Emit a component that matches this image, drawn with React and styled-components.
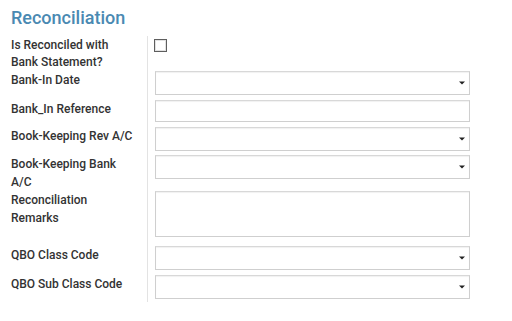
import React from "react";
import styled, { createGlobalStyle } from "styled-components";

const Global = createGlobalStyle`
  html, body { margin: 0; padding: 0; background: #fff; }
  body { font-family: Roboto, "Liberation Sans", sans-serif; }
  * { box-sizing: border-box; }
`;

const Page = styled.div`
  padding: 7px 0 0 0;
`;

const Title = styled.h2`
  margin: 0 0 7.5px 11px;
  font-family: Roboto, "Liberation Sans", sans-serif;
  font-size: 18px;
  font-weight: 500;
  line-height: 21px;
  color: #4a89b2;
`;

const Form = styled.div`
  display: flex;
  flex-direction: column;
`;

const Row = styled.div`
  display: grid;
  grid-template-columns: 136px 1fr;
  align-items: stretch;
`;

const Label = styled.div`
  padding: 1px 0 0 11px;
  font-size: 12px;
  line-height: 17.4px;
  font-weight: 500;
  color: #333;
`;

const Field = styled.div`
  border-left: 1px solid #e3e3e3;
  margin-left: 11px;
  padding: 0 0 ${(p) => (p.$last ? 3 : 4.7)}px 7px;
`;

const Check = styled.input.attrs({ type: "checkbox" })`
  appearance: none;
  display: block;
  width: 13px;
  height: 13px;
  margin: 3px 0 0 -1px;
  border: 1px solid #5e5e5e;
  box-shadow: inset 0 0 0 1px #e2e2e2;
  background: #fff;
  border-radius: 0;
`;

const controlBase = `
  display: block;
  width: 315px;
  border: 1px solid #cfcfcf;
  border-top-color: #d8d8d8;
  box-shadow: inset 0 1px 1px rgba(0,0,0,0.06);
  background: #fff;
  border-radius: 0;
  font-family: Roboto, "Liberation Sans", sans-serif;
  font-size: 11px;
  color: #333;
  padding: 0 6px;
  outline: none;
  margin: 0;
`;

const TextBox = styled.input.attrs({ type: "text" })`
  ${controlBase}
  height: 22px;
`;

const SelectWrap = styled.div`
  position: relative;
  width: 315px;
`;

const SelectBox = styled.select`
  ${controlBase}
  appearance: none;
  height: 24px;
`;

const Caret = styled.svg`
  position: absolute;
  right: 5px;
  top: 10px;
  width: 6px;
  height: 4px;
  pointer-events: none;
`;

const Area = styled.textarea`
  ${controlBase}
  height: 46px;
  resize: none;
  margin-bottom: 4px;
  padding: 4px 6px;
`;

function Select() {
  return (
    <SelectWrap>
      <SelectBox defaultValue="">
        <option value=""></option>
      </SelectBox>
      <Caret viewBox="0 0 6 4">
        <path d="M0 0.5 H6 L3 3.5 Z" fill="#222" />
      </Caret>
    </SelectWrap>
  );
}

export default function App() {
  return (
    <>
      <Global />
      <Page>
        <Title>Reconciliation</Title>
        <Form>
          <Row>
            <Label>Is Reconciled with Bank Statement?</Label>
            <Field>
              <Check />
            </Field>
          </Row>
          <Row>
            <Label>Bank-In Date</Label>
            <Field>
              <Select />
            </Field>
          </Row>
          <Row>
            <Label>Bank_In Reference</Label>
            <Field>
              <TextBox />
            </Field>
          </Row>
          <Row>
            <Label>Book-Keeping Rev A/C</Label>
            <Field>
              <Select />
            </Field>
          </Row>
          <Row>
            <Label>Book-Keeping Bank A/C</Label>
            <Field>
              <Select />
            </Field>
          </Row>
          <Row>
            <Label>Reconciliation Remarks</Label>
            <Field>
              <Area />
            </Field>
          </Row>
          <Row>
            <Label>QBO Class Code</Label>
            <Field>
              <Select />
            </Field>
          </Row>
          <Row>
            <Label>QBO Sub Class Code</Label>
            <Field $last>
              <Select />
            </Field>
          </Row>
        </Form>
      </Page>
    </>
  );
}
